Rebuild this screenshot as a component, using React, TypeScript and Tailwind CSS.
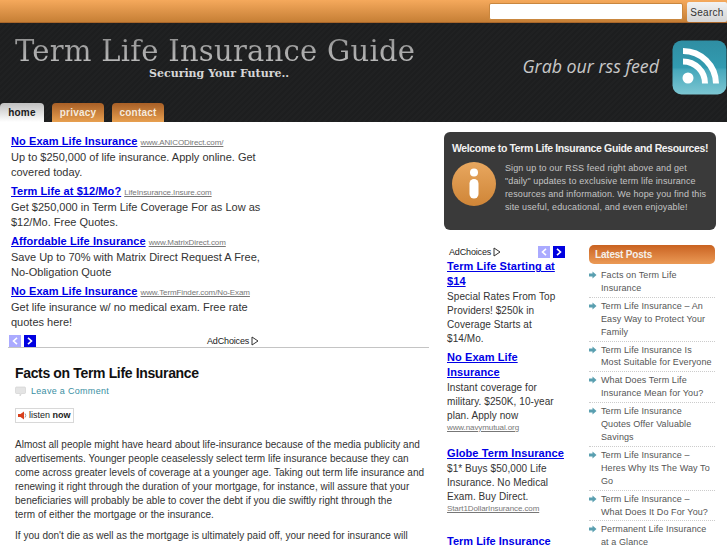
const sans = "font-['Liberation_Sans',Arial,sans-serif]";

function Rss() {
  return (
    <svg width="55" height="55" viewBox="0 0 55 55" className="block">
      <defs>
        <linearGradient id="rssbg" x1="0" y1="0" x2="0" y2="1">
          <stop offset="0" stopColor="#2f8ea3" />
          <stop offset="0.5" stopColor="#329bb0" />
          <stop offset="0.55" stopColor="#49a9bc" />
          <stop offset="1" stopColor="#7cc6d2" />
        </linearGradient>
      </defs>
      <rect x="0.5" y="0.5" width="54" height="54" rx="9" fill="url(#rssbg)" />
      <circle cx="16" cy="38" r="5.5" fill="#fff" />
      <path d="M11 21.5 A22 22 0 0 1 33 43.5" fill="none" stroke="#fff" strokeWidth="6" />
      <path d="M11 11 A33 33 0 0 1 44 43.5" fill="none" stroke="#fff" strokeWidth="6" />
    </svg>
  );
}

function Info() {
  return (
    <svg width="44" height="44" viewBox="0 0 44 44" className="block shrink-0">
      <defs>
        <linearGradient id="infobg" x1="0" y1="0" x2="0" y2="1">
          <stop offset="0" stopColor="#e8a75f" />
          <stop offset="1" stopColor="#cf8537" />
        </linearGradient>
      </defs>
      <circle cx="22" cy="22" r="22" fill="url(#infobg)" />
      <circle cx="22" cy="10.5" r="4" fill="#fff" />
      <rect x="17.5" y="17" width="9" height="19.5" rx="4.5" fill="#fff" />
    </svg>
  );
}

function AdChoices({ className = "" }: { className?: string }) {
  return (
    <span className={`inline-flex items-center gap-[2px] text-[9px] leading-3 tracking-[-0.15px] text-[#222] ${className}`}>
      AdChoices
      <svg width="8" height="10" viewBox="0 0 8 10">
        <path d="M1 1 L7 5 L1 9 Z" fill="none" stroke="#333" strokeWidth="1" />
      </svg>
    </span>
  );
}

function Arrows() {
  return (
    <span className="flex gap-[3px]">
      <span className="flex h-3 w-3 items-center justify-center bg-[#aaaaff]">
        <svg width="6" height="8" viewBox="0 0 6 8"><path d="M5 0.8 L1.5 4 L5 7.2" fill="none" stroke="#fff" strokeWidth="1.6" /></svg>
      </span>
      <span className="flex h-3 w-3 items-center justify-center bg-[#0000e0]">
        <svg width="6" height="8" viewBox="0 0 6 8"><path d="M1 0.8 L4.5 4 L1 7.2" fill="none" stroke="#fff" strokeWidth="1.6" /></svg>
      </span>
    </span>
  );
}

const topAds = [
  ["No Exam Life Insurance", "www.ANICODirect.com/", "Up to $250,000 of life insurance. Apply online. Get covered today."],
  ["Term Life at $12/Mo?", "LifeInsurance.Insure.com", "Get $250,000 in Term Life Coverage For as Low as $12/Mo. Free Quotes."],
  ["Affordable Life Insurance", "www.MatrixDirect.com", "Save Up to 70% with Matrix Direct Request A Free, No-Obligation Quote"],
  ["No Exam Life Insurance", "www.TermFinder.com/No-Exam", "Get life insurance w/ no medical exam. Free rate quotes here!"],
];

const sideAds = [
  ["Term Life Starting at $14", "Special Rates From Top Providers! $250k in Coverage Starts at $14/Mo.", ""],
  ["No Exam Life Insurance", "Instant coverage for military. $250K, 10-year plan. Apply now", "www.navymutual.org"],
  ["Globe Term Insurance", "$1* Buys $50,000 Life Insurance. No Medical Exam. Buy Direct.", "Start1DollarInsurance.com"],
];

const posts = [
  "Facts on Term Life Insurance",
  "Term Life Insurance – An Easy Way to Protect Your Family",
  "Term Life Insurance Is Most Suitable for Everyone",
  "What Does Term Life Insurance Mean for You?",
  "Term Life Insurance Quotes Offer Valuable Savings",
  "Term Life Insurance – Heres Why Its The Way To Go",
  "Term Life Insurance – What Does It Do For You?",
  "Permanent Life Insurance at a Glance",
];

function Tab({ label, active }: { label: string; active?: boolean }) {
  return (
    <div
      className={`flex h-[19px] items-center justify-center rounded-t-[4px] text-[10px] font-bold tracking-[0.2px] ${
        active
          ? "w-[44px] bg-gradient-to-b from-[#c0c0c0] to-[#ffffff] text-[#1a1a1a]"
          : "w-[52px] bg-gradient-to-b from-[#a85f26] to-[#e8a050] text-[#f6eadc]"
      }`}
    >
      {label}
    </div>
  );
}

export default function App() {
  return (
    <div className={`h-[545px] w-[727px] overflow-hidden bg-white ${sans}`}>
      {/* Search bar */}
      <div className="flex h-[23px] items-start justify-end gap-[4px] border-b border-[#a9662a] bg-gradient-to-b from-[#f5a95c] to-[#c67f35] pt-[2px]">
        <input className="mt-[1px] h-[17px] w-[194px] rounded-[2px] border border-[#c9873f] bg-white" />
        <div className="flex h-[20px] w-[40px] items-center justify-center rounded-[2px] bg-gradient-to-b from-[#f2f2f2] to-[#d4d4d4] text-[10px] tracking-[0.3px] text-[#333]">
          Search
        </div>
      </div>

      {/* Header */}
      <div className="h-[99px] bg-[repeating-linear-gradient(135deg,#1d1e1f_0px,#1d1e1f_2px,#202122_2px,#202122_4px)]">
        <div className="flex h-[80px] items-start justify-between">
          <div className="pl-[15px] pt-[11px]">
            <div className="whitespace-nowrap bg-gradient-to-b from-[#8d8d8d] to-[#c4c4c4] bg-clip-text font-['DejaVu_Serif',serif] text-[29px] leading-[34px] tracking-[0.27px] text-transparent">
              Term Life Insurance Guide
            </div>
            <div className="pl-[134px] font-['DejaVu_Serif',serif] text-[11px] font-bold leading-3 text-[#d6d6d6] whitespace-nowrap">
              Securing Your Future..
            </div>
          </div>
          <div className="flex items-center gap-[13px] pt-[17px]">
            <span className="whitespace-nowrap pb-[4px] font-['Open_Sans',sans-serif] text-[17.8px] italic leading-[24px] text-[#c8c8c8]">
              Grab our rss feed
            </span>
            <Rss />
          </div>
        </div>
        <div className="flex h-[19px] items-end gap-2">
          <Tab label="home" active />
          <Tab label="privacy" />
          <Tab label="contact" />
        </div>
      </div>

      {/* Content */}
      <div className="flex h-[423px] items-start overflow-hidden rounded-t-[4px] bg-white">
        {/* Main */}
        <div className="w-[437px] shrink-0 px-[8px]">
          <div className="border-b border-[#c4c4c4] pt-[12px]">
            {topAds.map((a) => (
              <div key={a[0] + a[1]} className="mb-[4px] w-[262px] pl-[3px] text-[11px] leading-[15px] text-[#333]">
                <div className="flex items-baseline gap-[3px] whitespace-nowrap">
                  <span className="text-[11px] font-bold tracking-[0.08px] text-[#0000e6] underline">{a[0]}</span>
                  <span className="text-[8px] tracking-[-0.1px] text-[#777] underline">{a[1]}</span>
                </div>
                <div>{a[2]}</div>
              </div>
            ))}
            <div className="flex h-[13px] items-center">
              <span className="pl-[1px]"><Arrows /></span>
              <AdChoices className="ml-[171px]" />
            </div>
          </div>

          <div className="pl-[7px] pt-[16px]">
            <h1 className="text-[14px] font-bold leading-[18px] tracking-[-0.35px] text-[#111]">Facts on Term Life Insurance</h1>
            <div className="mt-[3px] flex items-center gap-[5px] text-[9px] leading-3 tracking-[0.3px] text-[#3b8fa3]">
              <svg width="11" height="11" viewBox="0 0 11 11">
                <path d="M1.5 1 H9.5 Q10.5 1 10.5 2 V6.5 Q10.5 7.5 9.5 7.5 H6.5 L5 10 V7.5 H1.5 Q0.5 7.5 0.5 6.5 V2 Q0.5 1 1.5 1 Z" fill="#e4e4e4" stroke="#cfcfcf" strokeWidth="0.6" />
              </svg>
              Leave a Comment
            </div>
            <div className="mt-[11px] flex h-[15px] w-[59px] items-center gap-[2px] border border-[#d8d8d8] pl-[2px] text-[9px] leading-none text-[#222]">
              <svg width="9" height="9" viewBox="0 0 9 9">
                <path d="M0 3 H2.5 L6 0.5 V8.5 L2.5 6 H0 Z" fill="#d8401c" />
                <path d="M7 2.5 Q8.5 4.5 7 6.5" fill="none" stroke="#999" strokeWidth="1" />
              </svg>
              <span>listen <b>now</b></span>
            </div>
            <p className="mt-[15px] w-[414px] text-[10px] leading-[14px] tracking-[0.02px] text-[#333]">
              Almost all people might have heard about life-insurance because of the media publicity and advertisements. Younger people ceaselessly select term life insurance because they can come across greater levels of coverage at a younger age. Taking out term life insurance and renewing it right through the duration of your mortgage, for instance, will assure that your<br />beneficiaries will probably be able to cover the debt if you die swiftly right through the<br />term of either the mortgage or the insurance.
            </p>
            <p className="mt-[7px] w-[414px] text-[10px] leading-[14px] tracking-[0.02px] text-[#333]">
              If you don't die as well as the mortgage is ultimately paid off, your need for insurance will
            </p>
          </div>
        </div>

        {/* Right */}
        <div className="w-[290px] shrink-0 pl-[7px] pt-[10px]">
          <div className="h-[98px] w-[272px] rounded-[6px] bg-[#3a3a3a] px-[8px] pt-[9px]">
            <div className="whitespace-nowrap text-[10.5px] font-bold leading-[14px] tracking-[-0.37px] text-[#f2f2f2]">
              Welcome to Term Life Insurance Guide and Resources!
            </div>
            <div className="mt-[7px] flex gap-[9px]">
              <Info />
              <p className="text-[9px] leading-[13px] tracking-[0.12px] text-[#c4c4c4]">
                Sign up to our RSS feed right above and get "daily" updates to exclusive term life insurance resources and information. We hope you find this site useful, educational, and even enjoyable!
              </p>
            </div>
          </div>

          <div className="mt-[15px] flex">
            {/* Side ads */}
            <div className="w-[145px] shrink-0 pl-[3px] pt-[1px]">
              <div className="flex w-[118px] items-center justify-between pl-[2px]">
                <AdChoices />
                <Arrows />
              </div>
              <div className="mt-[1px] w-[120px]">
                {sideAds.map((a) => (
                  <div key={a[0]} className={`${a[2] ? "mb-[13px]" : "mb-[4px]"} text-[10px] leading-[14px] tracking-[0.08px] text-[#333]`}>
                    <div className="text-[11px] font-bold leading-[15px] text-[#0000e6] underline">{a[0]}</div>
                    <div className="pt-[1px]">{a[1]}</div>
                    {a[2] && <div className="text-[8px] leading-[10px] tracking-[-0.1px] text-[#777] underline">{a[2]}</div>}
                  </div>
                ))}
                <div className="mt-[20px] text-[11px] font-bold leading-[15px] text-[#0000e6] underline">Term Life Insurance</div>
              </div>
            </div>

            {/* Latest posts */}
            <div className="w-[126px] shrink-0">
              <div className="flex h-[19px] items-center rounded-[5px] bg-gradient-to-b from-[#c9621f] to-[#eb9a55] pl-[6px] text-[10px] font-bold tracking-[-0.2px] text-[#f5f0ea]">
                Latest Posts
              </div>
              <ul className="mt-[3px]">
                {posts.map((p) => (
                  <li key={p} className="flex gap-[4px] border-b border-dotted border-[#cccccc] py-[2px] text-[9px] leading-[12.9px] tracking-[0.1px] text-[#555]">
                    <svg width="8" height="13" viewBox="0 0 8 13" className="shrink-0">
                      <path d="M0 4.5 H3.5 V2.5 L7.5 6 L3.5 9.5 V7.5 H0 Z" fill="#5a9fb0" />
                    </svg>
                    <span className="w-[112px]">{p}</span>
                  </li>
                ))}
              </ul>
            </div>
          </div>
        </div>
      </div>
    </div>
  );
}
